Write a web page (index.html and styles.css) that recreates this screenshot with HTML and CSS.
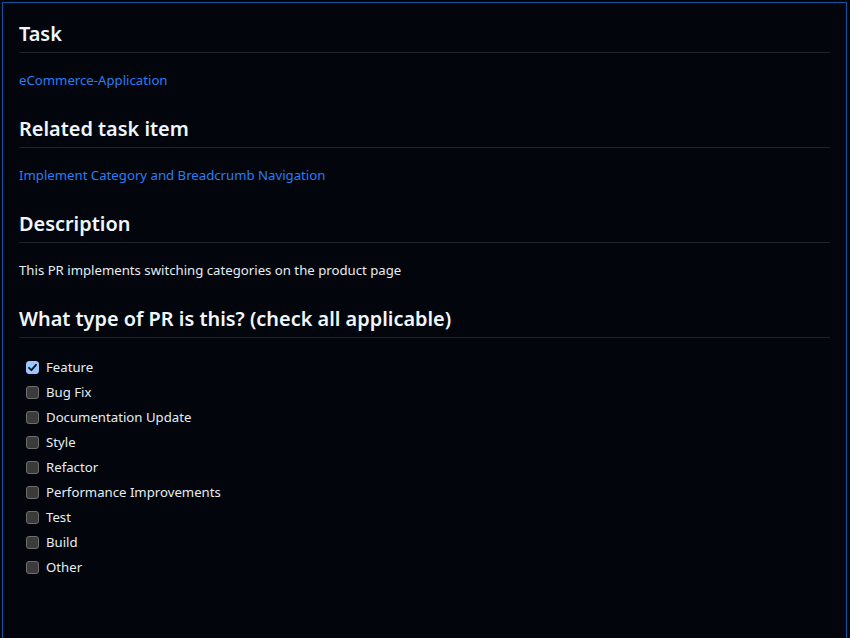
FILE: index.html
```html
<!DOCTYPE html>
<html lang="en">
<head>
<meta charset="utf-8">
<title>PR template</title>
<link rel="stylesheet" href="styles.css">
</head>
<body>
<div class="frame">
  <article class="markdown">
    <h2>Task</h2>
    <p><a href="#">eCommerce-Application</a></p>
    <h2>Related task item</h2>
    <p><a href="#">Implement Category and Breadcrumb Navigation</a></p>
    <h2>Description</h2>
    <p>This PR implements switching categories on the product page</p>
    <h2>What type of PR is this? (check all applicable)</h2>
    <ul class="tasks">
      <li><span class="box checked"><svg viewBox="0 0 13 13" width="13" height="13"><path d="M3 6.8 L5.4 9.2 L10 3.8" fill="none" stroke="#0d1117" stroke-width="1.8" stroke-linecap="round" stroke-linejoin="round"/></svg></span>Feature</li>
      <li><span class="box"></span>Bug Fix</li>
      <li><span class="box"></span>Documentation Update</li>
      <li><span class="box"></span>Style</li>
      <li><span class="box"></span>Refactor</li>
      <li><span class="box"></span>Performance Improvements</li>
      <li><span class="box"></span>Test</li>
      <li><span class="box"></span>Build</li>
      <li><span class="box"></span>Other</li>
    </ul>
  </article>
</div>
</body>
</html>
```
FILE: styles.css
```css
html, body {
  margin: 0;
  padding: 0;
  background: #010409;
  height: 100%;
  overflow: hidden;
}
.frame {
  margin: 2px 3px 0 2px;
  border: 1px solid #1055a3;
  border-bottom: none;
  background: #02060c;
  min-height: 700px;
  padding: 16px 16px 0 16px;
}
.markdown {
  font-family: "Noto Sans", "Open Sans", sans-serif;
  font-size: 13.2px;
  line-height: 21px;
  color: #e6edf3;
}
.markdown h2 {
  margin: 24px 0 16px;
  padding: 2px 0 5px;
  font-size: 19.9px;
  line-height: 26px;
  font-weight: 600;
  color: #f0f6fc;
  border-bottom: 1px solid #1e232a;
}
.markdown h2:first-child { margin-top: 0; }
.markdown p { margin: 0 0 16px; padding-top: 1px; }
.markdown p + h2 { margin-top: 23px; }
.markdown a { color: #2a7df5; text-decoration: none; }
.tasks {
  list-style: none;
  margin: 0;
  padding: 3px 0 0 7px;
}
.tasks li {
  display: flex;
  align-items: center;
  gap: 7px;
  height: 21px;
  margin-bottom: 4px;
}
.box {
  width: 11px;
  height: 11px;
  border: 1px solid #6e6e6e;
  border-radius: 3px;
  background: #3b3b3b;
  display: flex;
  align-items: center;
  justify-content: center;
}
.box.checked {
  background: #99c8ff;
  border-color: #99c8ff;
}
.box svg { display: block; width: 13px; height: 13px; flex: none; }
```
